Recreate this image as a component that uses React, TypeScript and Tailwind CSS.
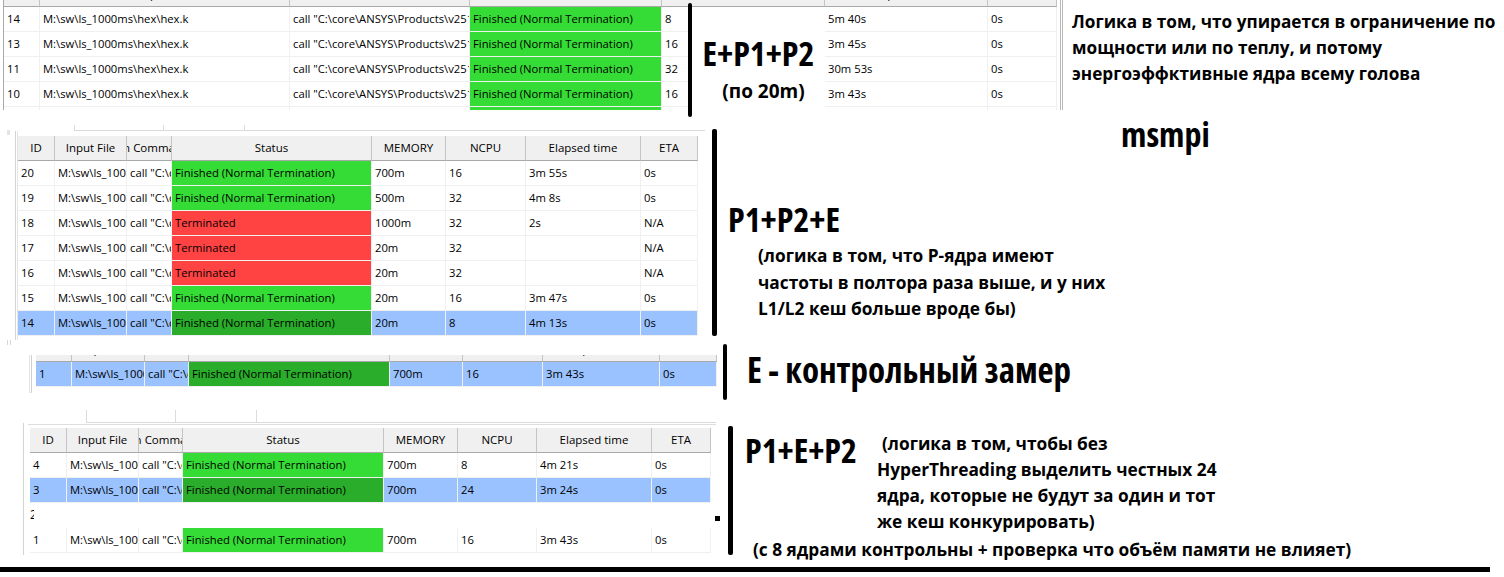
type Tone = 'ok' | 'fail';

interface JobRow {
  id: string;
  file: string;
  cmd: string;
  status: string;
  tone: Tone;
  mem?: string;
  ncpu: string;
  elapsed: string;
  eta: string;
  selected?: boolean;
}

interface Column {
  key: keyof JobRow;
  label: string;
}

const FILE = 'M:\\sw\\ls_1000ms\\hex\\hex.k';
const CMD = 'call "C:\\core\\ANSYS\\Products\\v251\\ansys\\bin\\winx64\\lsdyna_dp.exe"';
const DONE = 'Finished (Normal Termination)';

// big labels use the condensed cut, the remarks the normal one
const title = "font-['Open_Sans',sans-serif] font-bold [font-stretch:87.5%] text-black whitespace-nowrap";
const remark = "font-['Open_Sans',sans-serif] font-bold text-black whitespace-nowrap";

const fullCols: Column[] = [
  { key: 'id', label: 'ID' },
  { key: 'file', label: 'Input File' },
  { key: 'cmd', label: 'Run Command' },
  { key: 'status', label: 'Status' },
  { key: 'mem', label: 'MEMORY' },
  { key: 'ncpu', label: 'NCPU' },
  { key: 'elapsed', label: 'Elapsed time' },
  { key: 'eta', label: 'ETA' },
];

const wideCols: Column[] = [
  { key: 'id', label: 'ID' },
  { key: 'file', label: 'Input File' },
  { key: 'cmd', label: 'Run Command' },
  { key: 'status', label: 'Status' },
  { key: 'ncpu', label: 'NCPU' },
  { key: 'elapsed', label: 'Elapsed time' },
  { key: 'eta', label: 'ETA' },
];

const hexRuns: JobRow[] = [
  { id: '14', file: FILE, cmd: CMD, status: DONE, tone: 'ok', ncpu: '8', elapsed: '5m 40s', eta: '0s' },
  { id: '13', file: FILE, cmd: CMD, status: DONE, tone: 'ok', ncpu: '16', elapsed: '3m 45s', eta: '0s' },
  { id: '11', file: FILE, cmd: CMD, status: DONE, tone: 'ok', ncpu: '32', elapsed: '30m 53s', eta: '0s' },
  { id: '10', file: FILE, cmd: CMD, status: DONE, tone: 'ok', ncpu: '16', elapsed: '3m 43s', eta: '0s' },
  { id: '9', file: FILE, cmd: CMD, status: DONE, tone: 'ok', ncpu: '16', elapsed: '3m 41s', eta: '0s' },
];

const msmpiRuns: JobRow[] = [
  { id: '20', file: FILE, cmd: CMD, status: DONE, tone: 'ok', mem: '700m', ncpu: '16', elapsed: '3m 55s', eta: '0s' },
  { id: '19', file: FILE, cmd: CMD, status: DONE, tone: 'ok', mem: '500m', ncpu: '32', elapsed: '4m 8s', eta: '0s' },
  { id: '18', file: FILE, cmd: CMD, status: 'Terminated', tone: 'fail', mem: '1000m', ncpu: '32', elapsed: '2s', eta: 'N/A' },
  { id: '17', file: FILE, cmd: CMD, status: 'Terminated', tone: 'fail', mem: '20m', ncpu: '32', elapsed: '', eta: 'N/A' },
  { id: '16', file: FILE, cmd: CMD, status: 'Terminated', tone: 'fail', mem: '20m', ncpu: '32', elapsed: '', eta: 'N/A' },
  { id: '15', file: FILE, cmd: CMD, status: DONE, tone: 'ok', mem: '20m', ncpu: '16', elapsed: '3m 47s', eta: '0s' },
  { id: '14', file: FILE, cmd: CMD, status: DONE, tone: 'ok', mem: '20m', ncpu: '8', elapsed: '4m 13s', eta: '0s', selected: true },
];

const controlRun: JobRow[] = [
  { id: '1', file: FILE, cmd: CMD, status: DONE, tone: 'ok', mem: '700m', ncpu: '16', elapsed: '3m 43s', eta: '0s', selected: true },
];

const splitRuns: JobRow[] = [
  { id: '4', file: FILE, cmd: CMD, status: DONE, tone: 'ok', mem: '700m', ncpu: '8', elapsed: '4m 21s', eta: '0s' },
  { id: '3', file: FILE, cmd: CMD, status: DONE, tone: 'ok', mem: '700m', ncpu: '24', elapsed: '3m 24s', eta: '0s', selected: true },
];

const splitLast: JobRow[] = [
  { id: '1', file: FILE, cmd: CMD, status: DONE, tone: 'ok', mem: '700m', ncpu: '16', elapsed: '3m 43s', eta: '0s' },
];

function cellBg(row: JobRow, key: keyof JobRow) {
  if (key === 'status') {
    if (row.tone === 'fail') return 'bg-[#ff4343]';
    return row.selected ? 'bg-[#2aad2a]' : 'bg-[#35dc35]';
  }
  return row.selected ? 'bg-[#99c2ff]' : 'bg-white';
}

interface GridProps {
  cols: Column[];
  rows: JobRow[];
  template: string;
  header?: 'full' | 'clipped' | 'none';
}

function JobGrid({ cols, rows, template, header = 'full' }: GridProps) {
  const head = (
    <div className={`grid ${template} h-[25px] shrink-0`}>
      {cols.map(c => (
        <div
          key={c.key}
          className="flex h-[25px] items-center justify-center overflow-hidden whitespace-nowrap border-r border-b border-r-[#c4c4c4] border-b-[#a8a8a8] bg-[#f0f0f0] text-[11.5px] text-black"
        >
          {c.label}
        </div>
      ))}
    </div>
  );

  return (
    <div className="flex flex-col font-['Open_Sans',sans-serif]">
      {header === 'full' && head}
      {header === 'clipped' && (
        <div className="flex h-[7px] flex-col justify-end overflow-hidden">{head}</div>
      )}
      {rows.map((row, i) => (
        <div key={row.id + i} className={`grid ${template}`}>
          {cols.map(c => (
            <div
              key={c.key}
              className={`h-[25px] overflow-hidden whitespace-nowrap border-r border-b border-[#f0f0f0] pl-[3px] text-[11.25px] leading-[24px] text-black ${cellBg(row, c.key)}`}
            >
              {row[c.key] as string}
            </div>
          ))}
        </div>
      ))}
    </div>
  );
}

function TabStrip({ className }: { className: string }) {
  return (
    <div className={`flex border-b border-[#d9d9d9] ${className}`}>
      <div className="w-[90px] border-x border-[#dcdcdc]" />
      <div className="w-[81px] border-r border-[#dcdcdc]" />
      <div className="flex-1" />
    </div>
  );
}

function Bar({ className }: { className: string }) {
  return <div className={`shrink-0 rounded-[2px] bg-black ${className}`} />;
}

export default function App() {
  return (
    <div className="flex h-[577px] w-[1504px] flex-col overflow-hidden bg-white">
      {/* first run set, pasted across the top */}
      <div className="relative flex h-[110px] shrink-0">
        <div className="ml-[3px] flex h-[110px] shrink-0 overflow-hidden border-l border-[#a9a9a9]">
          <div className="w-[1053px]">
            <JobGrid
              cols={wideCols}
              rows={hexRuns}
              header="clipped"
              template="grid-cols-[36px_250px_180px_192px_163px_163px_69px]"
            />
          </div>
          <div className="w-[3px]" />
          <div className="w-[3px] border-x border-[#b9b9b9]" />
        </div>

        <div className="absolute left-[688px] top-[3px] flex h-[114px]">
          <Bar className="h-[114px] w-[4px]" />
          <div className="mt-[4px] flex h-[103px] w-[133px] flex-col items-center bg-white">
            <div className={`${title} mt-[26px] text-[34px] leading-[40px]`}>E+P1+P2</div>
            <div className={`${remark} ml-[10px] mt-[5px] text-[19px] leading-[26px]`}>(по 20m)</div>
          </div>
        </div>

        <div className={`${remark} shrink-0 pl-[9px] pt-[9px] text-[17.2px] leading-[26px]`}>
          <div>Логика в том, что упирается в ограничение по</div>
          <div>мощности или по теплу, и потому</div>
          <div>энергоэффктивные ядра всему голова</div>
        </div>
      </div>

      {/* msmpi runs */}
      <div className="flex h-[230px] shrink-0">
        <div className="ml-[7px] mt-[20px] h-[5px] w-[3px] bg-[#e4e4e4]" />
        <div className="ml-[5px] mt-[15px] flex w-[690px] shrink-0 flex-col">
          <TabStrip className="ml-[59px] h-[6px]" />
          <div className="flex h-[210px] border-l border-[#d4d4d4] pl-[1px]">
            <div className="flex flex-1 flex-col border-l border-[#e6e6e6] pt-[5px]">
              <JobGrid
                cols={fullCols}
                rows={msmpiRuns}
                template="grid-cols-[37px_72px_45px_200px_74px_80px_115px_57px]"
              />
            </div>
          </div>
        </div>
        <Bar className="ml-[7px] mt-[19px] h-[207px] w-[5px]" />
        <div className="ml-[11px] flex flex-col">
          <div className={`${title} ml-[393px] mt-[4px] text-[34px] leading-[40px]`}>msmpi</div>
          <div className={`${title} mt-[47px] text-[34px] leading-[36px]`}>P1+P2+E</div>
          <div className={`${remark} ml-[30px] mt-[6px] text-[17.3px] leading-[26.5px]`}>
            <div>(логика в том, что Р-ядра имеют</div>
            <div>частоты в полтора раза выше, и у них</div>
            <div>L1/L2 кеш больше вроде бы)</div>
          </div>
        </div>
      </div>

      {/* control run */}
      <div className="flex h-[70px] shrink-0">
        <div className="ml-[7px] h-[5px] w-[4px] border-x border-[#d8d8d8]" />
        <div className="ml-[18px] mt-[15px] flex h-[38px] w-[689px] shrink-0 border-l border-[#e4e4e4] pl-[1px]">
          <div className="flex flex-1 flex-col border-l border-[#cfcfcf] pl-[4px]">
            <JobGrid
              cols={fullCols}
              rows={controlRun}
              header="clipped"
              template="grid-cols-[36px_73px_44px_201px_73px_80px_117px_57px]"
            />
          </div>
        </div>
        <Bar className="ml-[5px] mt-[4px] h-[56px] w-[4px]" />
        <div className={`${title} ml-[20px] mt-[10px] text-[35px] leading-[40px]`}>E - контрольный замер</div>
      </div>

      {/* P1+E+P2 runs */}
      <div className="flex h-[157px] shrink-0">
        <div className="ml-[23px] flex w-[693px] shrink-0 flex-col">
          <TabStrip className="ml-[63px] h-[13px]" />
          <div className="flex h-[132px] flex-col border-l border-[#d4d4d4] pl-[4px]">
            <div className="mt-[1px] border-t border-[#dedede]" />
            <div className="mt-[3px] pl-[2px]">
              <JobGrid
                cols={fullCols}
                rows={splitRuns}
                template="grid-cols-[37px_72px_44px_201px_74px_79px_115px_59px]"
              />
              <div className="h-[25px] w-[4px] overflow-hidden pt-[2px] font-['Open_Sans',sans-serif] text-[12px] leading-[20px] text-black">
                2
              </div>
              <JobGrid
                cols={fullCols}
                rows={splitLast}
                header="none"
                template="grid-cols-[37px_72px_44px_201px_74px_79px_115px_59px]"
              />
            </div>
          </div>
        </div>
        <div className="ml-[-1px] mt-[106px] h-[5px] w-[5px] shrink-0 bg-black" />
        <Bar className="ml-[8px] mt-[16px] h-[129px] w-[5px]" />
        <div className="ml-[12px] flex flex-col">
          <div className="flex items-start">
            <div className={`${title} mt-[20px] text-[34px] leading-[40px]`}>P1+E+P2</div>
            <div className={`${remark} ml-[20px] mt-[21px] text-[17.3px] leading-[26px]`}>
              <div className="pl-[5px]">(логика в том, чтобы без</div>
              <div>HyperThreading выделить честных 24</div>
              <div>ядра, которые не будут за один и тот</div>
              <div>же кеш конкурировать)</div>
            </div>
          </div>
          <div className={`${remark} ml-[8px] mt-[2px] text-[17.3px] leading-[26px]`}>
            (с 8 ядрами контрольны + проверка что объём памяти не влияет)
          </div>
        </div>
      </div>

      <div className="h-[5px] w-[1490px] shrink-0 bg-black" />
    </div>
  );
}
